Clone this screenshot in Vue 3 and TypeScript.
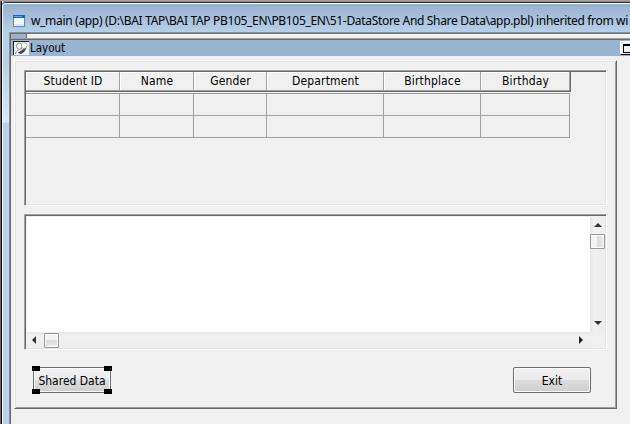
<script setup lang="ts">
const title: string = 'w_main (app) (D:\\BAI TAP\\BAI TAP PB105_EN\\PB105_EN\\51-DataStore And Share Data\\app.pbl) inherited from wi'
const columns: string[] = ['Student ID', 'Name', 'Gender', 'Department', 'Birthplace', 'Birthday']
const rows: number[] = [1, 2]
</script>

<template>
  <div class="window">
    <header class="titlebar">
      <svg class="app-icon" width="12" height="12" viewBox="0 0 12 12" shape-rendering="crispEdges">
        <rect width="12" height="12" fill="#6689ab" />
        <rect x="1" y="1" width="10" height="10" fill="#f2f9fe" />
        <rect width="12" height="3" fill="#1b64bd" />
        <rect x="1" y="1" width="8" height="1" fill="#63a4e4" />
        <rect x="1" y="9" width="10" height="2" fill="#d5ebf9" />
      </svg>
      <span class="title">{{ title }}</span>
    </header>
    <main class="client">
      <div class="strip"><i class="strip-tab"></i></div>
      <div class="layout-bar">
        <span class="pin">
          <svg width="14" height="13" viewBox="0 0 14 13">
            <path d="M1 12L4 8" stroke="#888" stroke-width="1" />
            <path d="M5 8L8 5L13 4L12 7L10 10L7 12L4 11Z" fill="#3a3a62" />
            <path d="M4 7L8 5L10 7L7 9L4 10Z" fill="#c9c7bd" />
            <ellipse cx="5.2" cy="4.2" rx="2.6" ry="3.2" fill="#fff" stroke="#77735e" stroke-width=".8" />
            <ellipse cx="10.2" cy="3.6" rx="2.7" ry="3" fill="#fff" stroke="#999" stroke-width=".6" />
            <path d="M3 10L6 8.5" stroke="#fff" stroke-width="1.5" />
          </svg>
        </span>
        <span class="bar-label">Layout</span>
        <span class="maximize"><i></i></span>
      </div>
      <section class="form">
        <div class="datawindow grid-view">
          <div class="row head"><div v-for="c in columns" :key="c" class="cell"><span>{{ c }}</span></div></div>
          <div class="rule"></div>
          <div v-for="r in rows" :key="r" class="row data"><div v-for="c in columns" :key="c" class="cell"></div></div>
        </div>
        <div class="datawindow preview">
          <div class="canvas"></div>
          <div class="vscroll">
            <svg class="arrow-up" width="8" height="4" viewBox="0 0 8 4"><path d="M4 0L8 4H0Z" fill="#333" /></svg>
            <div class="thumb-v"></div>
            <svg class="arrow-down" width="8" height="4" viewBox="0 0 8 4"><path d="M0 0H8L4 4Z" fill="#333" /></svg>
          </div>
          <div class="hscroll">
            <svg width="4" height="8" viewBox="0 0 4 8"><path d="M4 0V8L0 4Z" fill="#333" /></svg>
            <div class="thumb-h"></div>
            <svg class="arrow-right" width="4" height="8" viewBox="0 0 4 8"><path d="M0 0V8L4 4Z" fill="#222" /></svg>
          </div>
          <div class="corner"></div>
        </div>
        <footer class="actions">
          <button class="btn shared"><span>Shared Data</span><i class="handle tl"></i><i class="handle tr"></i><i class="handle bl"></i><i class="handle br"></i></button>
          <button class="btn exit"><span>Exit</span></button>
        </footer>
      </section>
    </main>
  </div>
</template>

<style>
body { margin: 0; overflow: hidden; }
</style>

<style scoped>
* { box-sizing: border-box; }
.window {
  width: 630px; height: 424px; overflow: hidden; display: flex; flex-direction: column;
  padding-left: 3px; border-top: 1px solid #a0a0a0;
  background: linear-gradient(90deg, #696969 0 1px, #000 1px 2px, #f5faff 2px 3px, transparent 3px), linear-gradient(#94afcd 0, #b7d0e9 31px, #b9d1ea 65px, #dce9f7 121px, #b9d1ea 122px);
  font-family: "DejaVu Sans Condensed", "DejaVu Sans", sans-serif; font-stretch: condensed; font-size: 12px; color: #000;
}
.titlebar {
  flex: none; height: 31px; margin-left: -1px; padding: 0 0 0 11px; display: flex; align-items: center;
  border-top: 1px solid #909090; box-shadow: inset 0 1px #2c2c2c, inset 0 2px #fff;
  border-top-left-radius: 4px; white-space: nowrap;
}
.app-icon { flex: none; margin-top: 7px; }
.title { font: 12px/18px "Noto Sans", "Open Sans", sans-serif; letter-spacing: -0.32px; margin: 7px 0 0 6px; }
.client { flex: 1; margin-left: 6px; border-left: 1px solid #909090; border-top: 1px solid #909090; background: #f0f0f0; box-shadow: inset 1px 1px #696969; padding: 1px 0 0 1px; }
.strip { height: 6px; background: #f0f0f0; border-bottom: 1px solid #696969; box-shadow: inset 0 1px #fff, inset 0 -1px #a0a0a0; }
.strip-tab { display: block; width: 16px; height: 4px; background: #99b4d1; border-right: 1px solid #696969; }
.layout-bar { height: 16px; background: #99b4d1; display: flex; align-items: center; padding-left: 2px; }
.pin { flex: none; width: 16px; height: 14px; background: #f0f0f0; border-top: 1px solid #222; border-left: 1px solid #222; }
.pin svg { display: block; }
.bar-label { margin-left: 1px; padding-top: 1px; line-height: 15px; font-size: 11.5px; }
.maximize { flex: none; margin-left: auto; width: 10px; height: 14px; padding: 2px 0 0 2px; background: #f0f0f0; border-top: 1px solid #fff; border-left: 1px solid #fff; border-bottom: 1px solid #000; overflow: hidden; }
.maximize i { display: block; width: 10px; height: 9px; border: 1px solid #000; border-top-width: 2px; }
.form {
  width: 603px; height: 349px; margin: 4px 0 0 3px; padding: 9px 8px 0 9px;
  border: solid; border-width: 1px; border-color: #fff #696969 #696969 #fff;
  box-shadow: inset 1px 1px #e3e3e3, inset -1px -1px #a0a0a0;
  background: #f0f0f0;
}
.datawindow { width: 583px; border: 1px solid; border-color: #a0a0a0 #fff #fff #a0a0a0; box-shadow: inset 1px 1px #696969, inset -1px -1px #e3e3e3; padding: 1px; }
.grid-view { height: 136px; }
.row { display: grid; grid-template-columns: 94px 74px 73px 117px 97px 89px; width: 544px; }
.head { height: 20px; border-bottom: 1px solid #696969; border-right: 1px solid #696969; width: 545px; }
.head .cell { text-align: center; line-height: 19px; height: 19px; border-right: 1px solid #a0a0a0; border-bottom: 1px solid #a0a0a0; box-shadow: inset 1px 1px #fff; padding-left: 1px; letter-spacing: .15px; }
.rule { width: 544px; height: 2px; border-bottom: 1px solid #a0a0a0; }
.data { height: 22px; border-bottom: 1px solid #a0a0a0; }
.data .cell { border-right: 1px solid #a0a0a0; }
.preview { height: 136px; margin-top: 8px; display: grid; grid-template-columns: 1fr 15px; grid-template-rows: 1fr 16px; }
.canvas { background: #fff; margin: 1px 0 0 1px; }
.vscroll { background: linear-gradient(90deg, #e6e6e6, #f1f1f1 4px, #eeeeee); margin-top: 1px; display: flex; flex-direction: column; align-items: center; padding: 6px 0 7px; }
.thumb-v { flex: none; width: 15px; height: 15px; margin-top: 7px; border: 1px solid #989898; border-radius: 1px; box-shadow: inset 0 0 0 1px #f8f8f8; background: linear-gradient(90deg, #f4f4f4 45%, #dcdcdc 50%, #ececec); }
.arrow-down { margin-top: auto; }
.hscroll { background: linear-gradient(#e6e6e6, #f1f1f1 4px, #eeeeee); margin-left: 1px; display: flex; align-items: center; padding: 0 7px 0 5px; }
.thumb-h { width: 15px; height: 15px; margin-left: 8px; border: 1px solid #989898; border-radius: 1px; box-shadow: inset 0 0 0 1px #f8f8f8; background: linear-gradient(#f4f4f4 45%, #dcdcdc 50%, #ececec); }
.arrow-right { margin-left: auto; }
.corner { background: #f0f0f0; }
.actions { display: flex; justify-content: space-between; padding: 17px 17px 0 9px; }
.btn { position: relative; width: 78px; height: 26px; padding: 0; border: 1px solid #707070; border-radius: 2px; box-shadow: inset 0 0 0 1px #fafafa; background: linear-gradient(#f2f2f2, #ebebeb 48%, #dddddd 50%, #cfcfcf); font: inherit; line-height: 24px; color: #000; white-space: nowrap; }
.btn span { display: block; padding-top: 2px; line-height: 22px; }
.shared { border-radius: 0; }
.handle { position: absolute; width: 8px; height: 5px; background: #000; }
.tl { left: -2px; top: -2px; }
.tr { right: -2px; top: -2px; }
.bl { left: -2px; bottom: -2px; }
.br { right: -2px; bottom: -2px; }
</style>
